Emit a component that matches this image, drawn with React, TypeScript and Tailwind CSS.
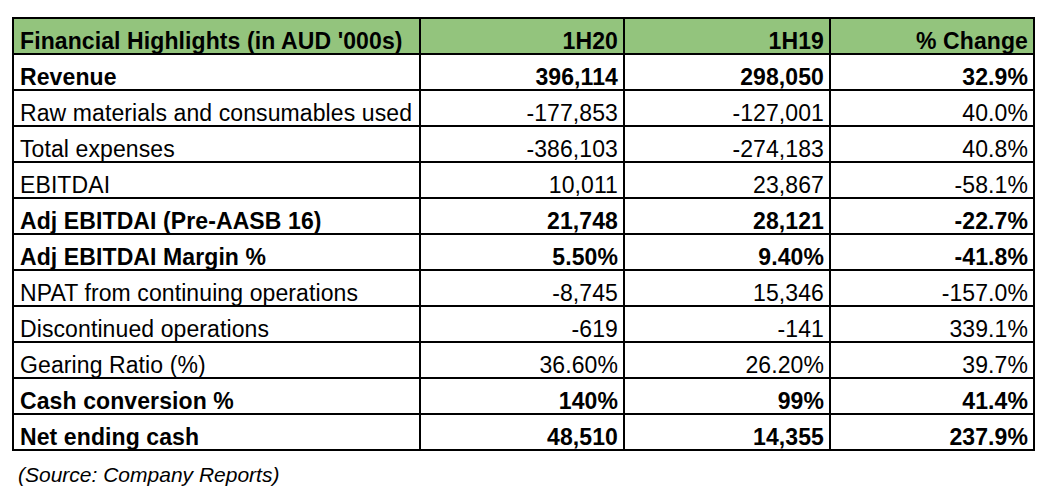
type Row = {
  label: string;
  a: string;
  b: string;
  c: string;
  bold?: boolean;
};

const rows: Row[] = [
  { label: "Revenue", a: "396,114", b: "298,050", c: "32.9%", bold: true },
  { label: "Raw materials and consumables used", a: "-177,853", b: "-127,001", c: "40.0%" },
  { label: "Total expenses", a: "-386,103", b: "-274,183", c: "40.8%" },
  { label: "EBITDAI", a: "10,011", b: "23,867", c: "-58.1%" },
  { label: "Adj EBITDAI (Pre-AASB 16)", a: "21,748", b: "28,121", c: "-22.7%", bold: true },
  { label: "Adj EBITDAI Margin %", a: "5.50%", b: "9.40%", c: "-41.8%", bold: true },
  { label: "NPAT from continuing operations", a: "-8,745", b: "15,346", c: "-157.0%" },
  { label: "Discontinued operations", a: "-619", b: "-141", c: "339.1%" },
  { label: "Gearing Ratio (%)", a: "36.60%", b: "26.20%", c: "39.7%" },
  { label: "Cash conversion %", a: "140%", b: "99%", c: "41.4%", bold: true },
  { label: "Net ending cash", a: "48,510", b: "14,355", c: "237.9%", bold: true },
];

const cell = "h-[36px] border-r-2 border-b-2 border-black flex items-end leading-[23px] whitespace-nowrap";

const Cell = ({ children, right, bold, head }: { children: string; right?: boolean; bold?: boolean; head?: boolean }) => (
  <div
    className={`${cell} ${right ? "justify-end pr-[5px]" : "pl-[6px]"} ${bold ? "font-bold" : ""} ${head ? "bg-[#93c47d]" : "bg-white"}`}
  >
    {children}
  </div>
);

export default function App() {
  return (
    <div className="w-[1053px] h-[499px] bg-white pl-[12px] pt-[17px] text-black font-['Liberation_Sans',Arial,sans-serif]">
      <div className="grid grid-cols-[407px_204px_206px_204px] w-[1023px] border-l-2 border-t-2 border-black text-[23px] tracking-[0.1px]">
        <Cell head bold>Financial Highlights (in AUD '000s)</Cell>
        <Cell head bold right>1H20</Cell>
        <Cell head bold right>1H19</Cell>
        <Cell head bold right>% Change</Cell>
        {rows.map((r) => (
          <>
            <Cell key={r.label} bold={r.bold}>{r.label}</Cell>
            <Cell bold={r.bold} right>{r.a}</Cell>
            <Cell bold={r.bold} right>{r.b}</Cell>
            <Cell bold={r.bold} right>{r.c}</Cell>
          </>
        ))}
      </div>
      <p className="mt-[13px] pl-[6px] text-[21px] leading-[21px] italic">(Source: Company Reports)</p>
    </div>
  );
}
